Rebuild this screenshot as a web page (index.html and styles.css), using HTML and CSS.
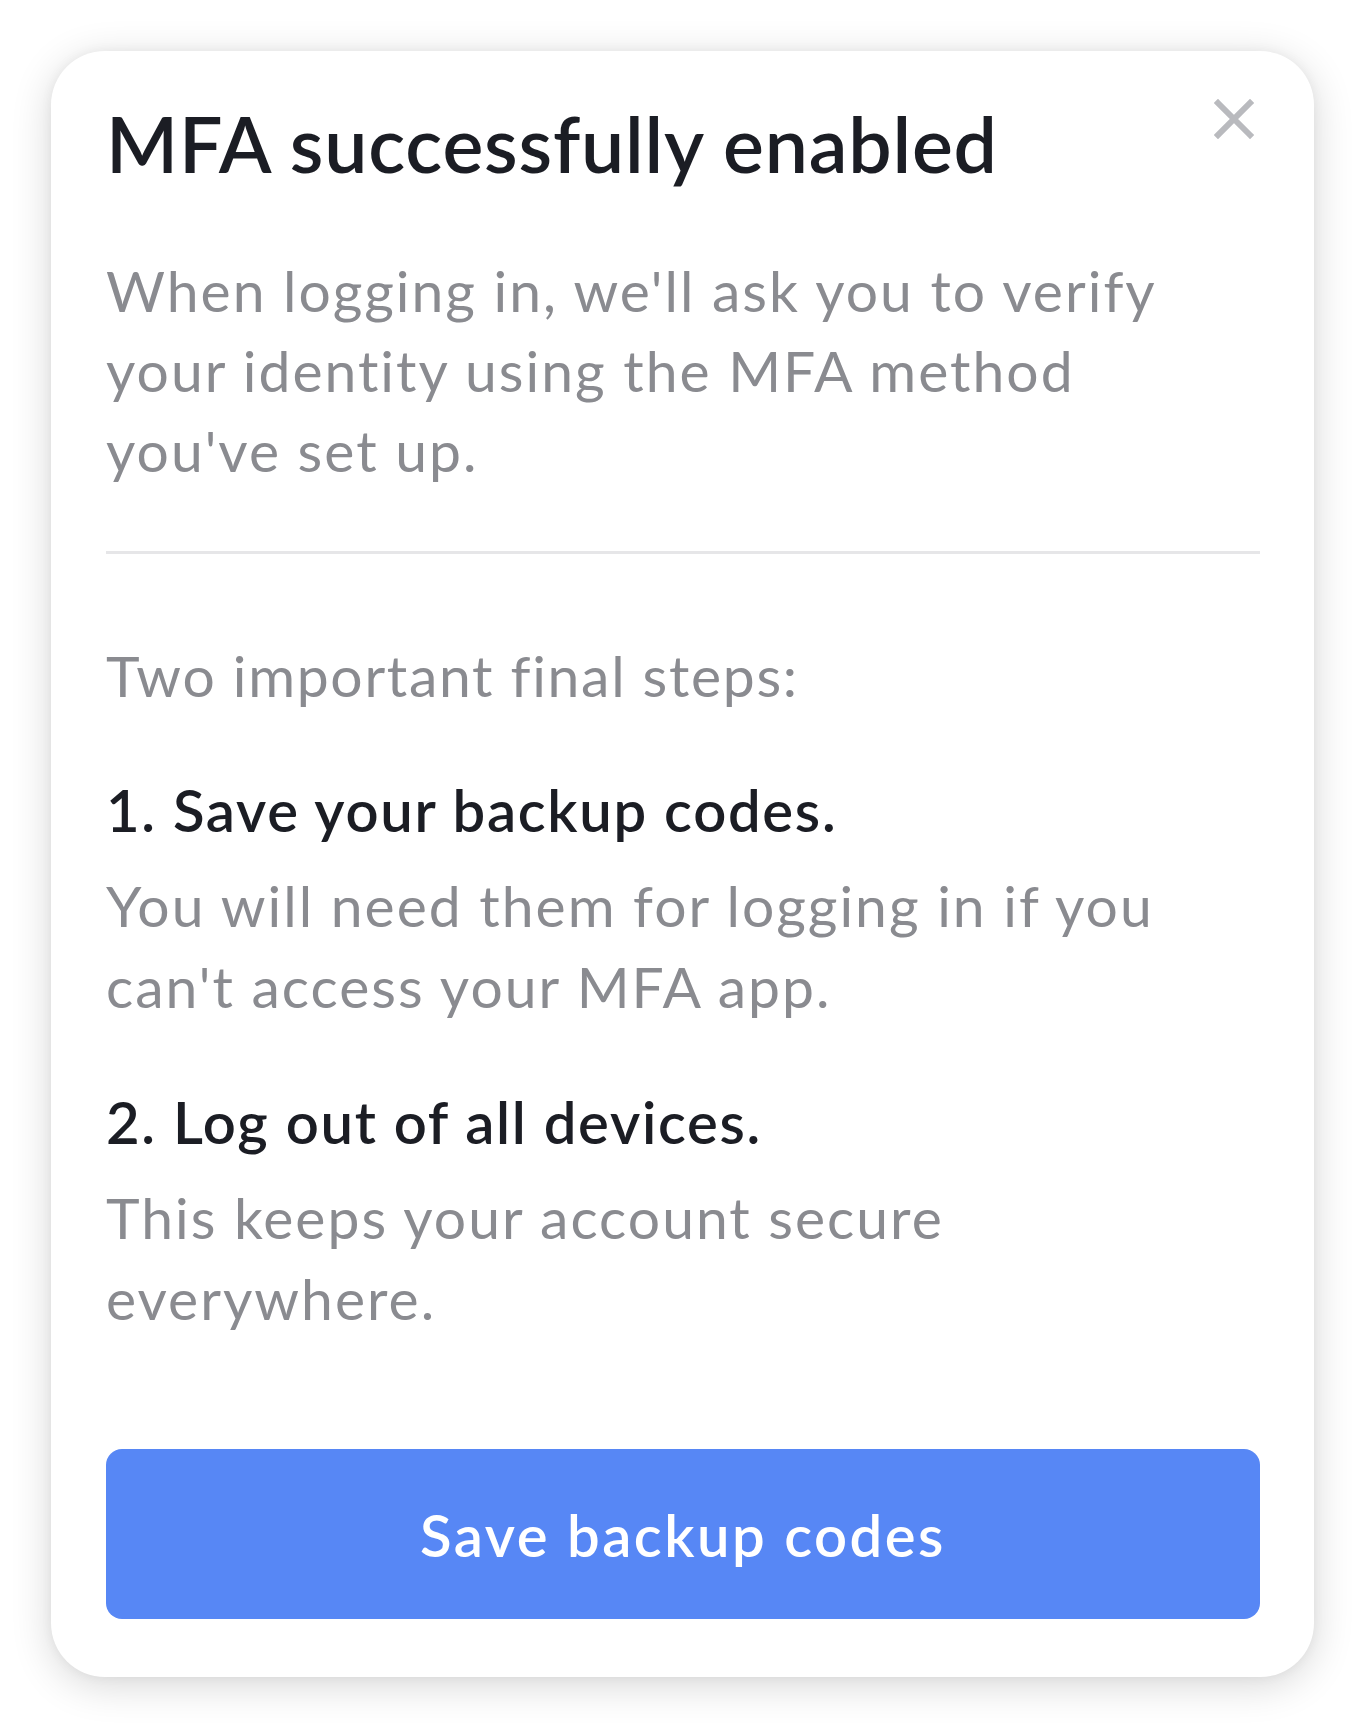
FILE: index.html
```html
<!DOCTYPE html>
<html lang="en">
<head>
<meta charset="utf-8">
<title>MFA successfully enabled</title>
<link rel="stylesheet" href="styles.css">
</head>
<body>
<div class="page">
  <div class="card" role="dialog" aria-labelledby="t">
    <button class="close" aria-label="Close">
      <svg viewBox="0 0 40 40" width="40" height="40"><path d="M4 4 L36 36 M36 4 L4 36" stroke="#b9babe" stroke-width="6" stroke-linecap="square" fill="none"/></svg>
    </button>
    <h1 id="t" class="title">MFA successfully enabled</h1>
    <p class="intro">When logging in, we'll ask you to verify your identity using the MFA method you've set up.</p>
    <hr class="divider">
    <p class="lead">Two important final steps:</p>
    <div class="step">
      <h2 class="step-title">1. Save your backup codes.</h2>
      <p class="step-text">You will need them for logging in if you can't access your MFA app.</p>
    </div>
    <div class="step">
      <h2 class="step-title">2. Log out of all devices.</h2>
      <p class="step-text">This keeps your account secure everywhere.</p>
    </div>
    <button class="primary">Save backup codes</button>
  </div>
</div>
</body>
</html>
```

FILE: styles.css
```css
* { box-sizing: border-box; }
html, body { margin: 0; padding: 0; background: #ffffff; }
body { font-family: "Lato", "Inter", sans-serif; }
.page { padding: 51px; }
.card {
  position: relative;
  background: #ffffff;
  border-radius: 54px;
  box-shadow: 0 8px 40px rgba(0,0,0,0.16), 0 0 12px rgba(0,0,0,0.05);
  padding: 46px 54px 58px 55px;
  display: flex;
  flex-direction: column;
}
.close {
  position: absolute;
  top: 48px;
  right: 60px;
  width: 40px;
  height: 40px;
  padding: 0;
  border: 0;
  background: transparent;
  display: flex;
}
.title {
  margin: 0;
  font-size: 77px;
  line-height: 1.2;
  font-weight: 600;
  letter-spacing: 0.8px;
  color: #1b1d24;
}
.intro, .lead, .step-text {
  margin: 0;
  font-size: 57px;
  line-height: 80px;
  color: #8a8b90;
  font-weight: 400;
  letter-spacing: 2px;
}
.intro { margin-top: 61px; padding-right: 60px; }
.divider {
  margin: 61px 0 0;
  border: 0;
  height: 3px;
  background: #e6e6e8;
}
.lead { margin-top: 81px; letter-spacing: 1.7px; }
.step { margin-top: 55px; display: flex; flex-direction: column; gap: 15px; }
.step-title {
  margin: 0;
  font-size: 58px;
  line-height: 80px;
  font-weight: 600;
  letter-spacing: 1.7px;
  color: #1b1d24;
}
.step-text { line-height: 81px; padding-right: 60px; }
.primary {
  margin-top: 110px;
  height: 170px;
  border: 0;
  border-radius: 16px;
  background: #5787f5;
  color: #ffffff;
  font-family: "Lato", "Inter", sans-serif;
  font-size: 58px;
  font-weight: 600;
  letter-spacing: 2.5px;
}
```
